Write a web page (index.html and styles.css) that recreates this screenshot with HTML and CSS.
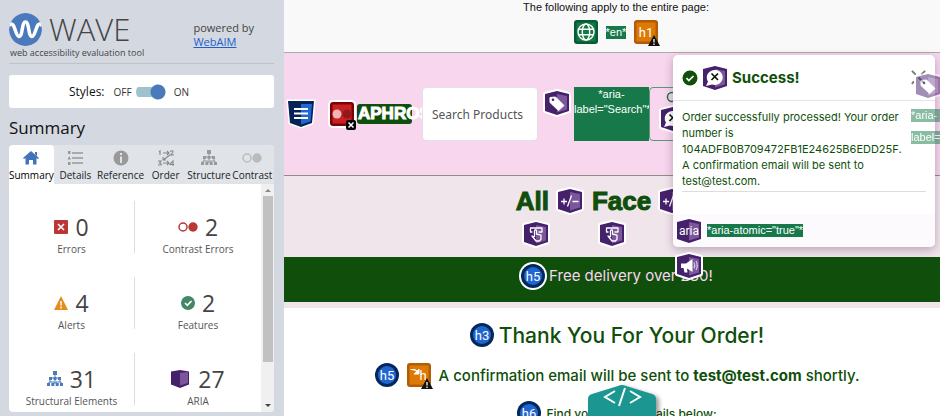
FILE: index.html
```html
<!DOCTYPE html>
<html lang="en">
<head>
<meta charset="utf-8">
<title>WAVE report</title>
<link rel="stylesheet" href="styles.css">
</head>
<body>
<svg class="defs" aria-hidden="true">
  <symbol id="shield" viewBox="-2 -2 28 28">
    <path d="M0 3 12 0l12 3v17l-12 4L0 20z" fill="#45206b" stroke="#fff" stroke-width="4" stroke-linejoin="round" paint-order="stroke"/>
    <path d="M12 3l10 2v13.500l-10 3z" fill="#7b569b"/>
  </symbol>
  <symbol id="tag" viewBox="-2 -2 28 28">
    <use href="#shield" x="-2" y="-2" width="28" height="28"/>
    <path d="M5 6.500 10.500 6l8.500 8.500-5.500 5L5 11.500z" fill="#fff" stroke="#fff" stroke-linejoin="round"/>
    <circle cx="8" cy="8.800" r="1.300" fill="#45206b"/>
  </symbol>
  <symbol id="bubble" viewBox="-2 -2 28 28">
    <use href="#shield" x="-2" y="-2" width="28" height="28"/>
    <path d="M3 20l2-4.500A8 7.500 0 1 1 9 18.500z" fill="#fff"/>
    <path d="M8.500 7.500l6.500 6.500M15 7.500 8.500 14" stroke="#111" stroke-width="1.700"/>
  </symbol>
  <symbol id="press" viewBox="-2 -2 28 28">
    <use href="#shield" x="-2" y="-2" width="28" height="28"/>
    <path d="M8.500 10H6.500V6H18v4h-3.500M10.500 15V8.500q1-1.500 2 0V12l4.500 1.200v4L15.500 19H12l-4-5 2.500 1" fill="none" stroke="#fff" stroke-width="1.300" stroke-linejoin="round"/>
  </symbol>
  <symbol id="expand" viewBox="-2 -2 28 28">
    <use href="#shield" x="-2" y="-2" width="28" height="28"/>
    <path d="M3 12.500h6M6 9.500v6M9.500 17.500l4-11M14.500 12.500h6" fill="none" stroke="#fff" stroke-width="1.300"/>
  </symbol>
  <symbol id="horn" viewBox="-2 -2 28 28">
    <use href="#shield" x="-2" y="-2" width="28" height="28"/>
    <path d="M4 9.500h5L15.500 5v13L10 14.500l.5 4h-3L6.500 14H4z" fill="#fff"/>
    <path d="M17 8.500q1.500 3 0 6M19 7q2.500 4.500 0 9" fill="none" stroke="#d9cbe6" stroke-width="1.200"/>
  </symbol>
  <symbol id="tree" viewBox="0 0 16 16">
    <path d="M8 3v9M3 9V7h10v2M2 13v-2h5v2M9 13v-2h5v2M3 8v3M13 8v3" fill="none" stroke="currentColor"/>
    <path d="M6 0h4v4H6zM2 6h3v3H2zM6.500 6h3v3h-3zM11 6h3v3h-3zM0 12h3v3H0zM4.300 12h3v3h-3zM8.700 12h3v3h-3zM13 12h3v3h-3z" fill="currentColor"/>
  </symbol>
  <symbol id="warn" viewBox="0 0 12 11">
    <path d="M6 0l6 11H0z" fill="#111"/><path d="M6 4v3.500M6 8.500V10" stroke="#fff" stroke-width="1.300"/>
  </symbol>
  <symbol id="ring" viewBox="0 0 24 24">
    <circle cx="12" cy="12" r="12" fill="#04275c"/><circle cx="12" cy="12" r="9" fill="#1f66d0"/>
  </symbol>
  <symbol id="square" viewBox="0 0 24 24">
    <rect width="24" height="24" rx="3" fill="#b25c07"/><rect x="2.500" y="2.500" width="19" height="19" fill="#dd7a06"/>
  </symbol>
</svg>

<aside class="sidebar">
  <header class="brand">
    <div class="brand-main">
      <div class="logo">
        <svg class="logo-mark" viewBox="0 0 33 33" aria-hidden="true"><circle cx="16.500" cy="16.500" r="16.500" fill="#4a7abb"/><path d="M0 12.500C6 6 6 23.500 10 23.500S12.500 9 16.500 9s2.500 14.500 6.500 14.500S27 6 33 12.500" fill="none" stroke="#fff" stroke-width="3.500"/></svg>
        <span class="logo-name">WAVE</span>
      </div>
      <p class="tagline">web accessibility evaluation tool</p>
    </div>
    <p class="powered">powered by<br><a href="#">WebAIM</a></p>
  </header>

  <div class="styles-card">
    <span class="styles-label" id="styles-label">Styles:</span>
    <span>OFF</span>
    <input class="switch" type="checkbox" role="switch" aria-labelledby="styles-label" checked>
    <span>ON</span>
  </div>

  <h1 class="title">Summary</h1>

  <section class="panel">
    <nav class="tabs">
      <button class="tab active"><svg viewBox="0 0 16 16"><path d="M8 1l8 7-1 1-1.500-1v6.500H10V10H6v4.500H2.500V8L1 9 0 8zM12 2h2v4l-2-2z" fill="#4272b8"/></svg>Summary</button>
      <button class="tab"><svg viewBox="0 0 16 16"><path d="M5 3h11M5 8h11M5 13h11" stroke="#999" stroke-width="1.500"/><path d="M1 1h2.500v3H1zM1 12h2.500v3H1zM0.500 9.500 2.200 6l1.800 3.500z" fill="#999"/></svg>Details</button>
      <button class="tab"><svg viewBox="0 0 16 16"><circle cx="8" cy="8" r="7.500" fill="#999"/><path d="M8 3v2M8 6.500V13" stroke="#e0e3e8" stroke-width="2"/></svg>Reference</button>
      <button class="tab"><svg viewBox="0 0 16 16"><path d="M1 2l1-1v4M5 3h6M9 1l2 2-2 2M12 1.500q3-1.500 3 0T12.500 5H16M12 5 5 10M5 7v3h3M0 11h3l-1.500 2Q4 13 3 15H0M5 13h6M9 11l2 2-2 2M15 16v-5l-3 3.500h4" fill="none" stroke="#888" stroke-width="1.100"/></svg>Order</button>
      <button class="tab"><svg class="grey"><use href="#tree"/></svg>Structure</button>
      <button class="tab"><svg class="wide" viewBox="0 0 20 16"><circle cx="5" cy="8" r="4" fill="none" stroke="#bbb" stroke-width="1.500"/><circle cx="15" cy="8" r="4.700" fill="#bbb"/></svg>Contrast</button>
    </nav>
    <div class="panel-body">
      <div class="stats">
        <div class="stat"><p class="count"><svg viewBox="0 0 14 14"><rect width="14" height="14" rx="1" fill="#bb3636"/><path d="M4 4l6 6M10 4l-6 6" stroke="#fff" stroke-width="1.600"/></svg>0</p><p>Errors</p></div>
        <div class="stat"><p class="count"><svg class="i20" viewBox="0 0 20 14"><circle cx="5" cy="7" r="4" fill="none" stroke="#bb3636" stroke-width="1.500"/><circle cx="15" cy="7" r="4.700" fill="#bb3636"/></svg>2</p><p>Contrast Errors</p></div>
        <div class="stat"><p class="count"><svg viewBox="0 0 14 14"><path d="M7 0l7 14H0z" fill="#e58c1a"/><path d="M7 5v4.500M7 10.500v2" stroke="#fff" stroke-width="1.500"/></svg>4</p><p>Alerts</p></div>
        <div class="stat"><p class="count"><svg viewBox="0 0 14 14"><circle cx="7" cy="7" r="7" fill="#438767"/><path d="M4 7l2.300 2.300L10.500 5" fill="none" stroke="#fff" stroke-width="1.700"/></svg>2</p><p>Features</p></div>
        <div class="stat"><p class="count"><svg class="i16 blue"><use href="#tree"/></svg>31</p><p>Structural Elements</p></div>
        <div class="stat"><p class="count"><svg class="i18" viewBox="0 0 18 18"><path d="M0 1.500 9 0l9 1.500v13L9 18l-9-3.500z" fill="#45206b"/><path d="M9 3l8-1v11l-8 2.500z" fill="#7b569b"/></svg>27</p><p>ARIA</p></div>
      </div>
      <div class="scrollbar" aria-hidden="true"><i class="up"></i><i class="thumb"></i><i class="down"></i></div>
    </div>
  </section>
</aside>

<main class="page">
  <section class="entire">
    <p>The following apply to the entire page:</p>
    <div class="entire-icons">
      <svg class="ico" viewBox="0 0 24 24"><rect width="24" height="24" rx="3" fill="#085c35"/><rect x="2.500" y="2.500" width="19" height="19" fill="#127946"/><g fill="none" stroke="#fff" stroke-width="1.400"><circle cx="12" cy="12" r="8"/><ellipse cx="12" cy="12" rx="3.700" ry="8"/><path d="M4.500 9.300h15M4.500 14.700h15"/></g></svg>
      <span class="note">*en*</span>
      <svg class="ico" viewBox="0 0 24 24"><use href="#square"/><text x="12" y="17" text-anchor="middle">h1</text><use href="#warn" x="14" y="15" width="12" height="11"/></svg>
    </div>
  </section>

  <header class="shop">
    <svg class="framed" viewBox="-2 -2 28 28"><path d="M-1-1h26l-2 22-11 4L1 21z" fill="#052356" stroke="#fff" stroke-width="3" paint-order="stroke"/><path d="M12 2h11l-1.500 17.500L12 22.500z" fill="#1f66d0"/><path d="M5 7h14M5 11.500h14M5 16h14" stroke="#fff" stroke-width="2"/></svg>
    <svg class="framed contrast" viewBox="-2 -2 28 28"><rect width="24" height="24" rx="3" fill="#7c0205" stroke="#fff" stroke-width="4" paint-order="stroke"/><rect x="2.500" y="2.500" width="19" height="19" fill="#ca2023"/><circle cx="7" cy="12" r="4.500" fill="#f0b5b9"/><circle cx="17" cy="12" r="4.500" fill="#92171a"/><rect x="16" y="18" width="10" height="10" rx="2" fill="#000"/><path d="M18.500 20.500l5 5M23.500 20.500l-5 5" stroke="#fff" stroke-width="1.500"/></svg>
    <a class="shop-logo" href="#">APHROS</a>
    <input class="search" type="text" placeholder="Search Products" aria-label="Search Products">
    <svg class="framed raised"><use href="#tag"/></svg>
    <div class="search-note">*aria-<br>label="Search"*</div>
    <button class="search-btn" aria-label="Search">
      <svg class="lens" viewBox="0 0 14 14"><circle cx="6" cy="6" r="4.500" fill="none" stroke="#127946" stroke-width="1.500"/><path d="M9 9l4 4" stroke="#127946" stroke-width="1.500"/></svg>
      <svg class="framed"><use href="#bubble"/></svg>
    </button>
  </header>

  <nav class="menu">
    <div class="menu-item"><div class="menu-top"><a href="#">All</a><svg class="framed"><use href="#expand"/></svg></div><svg class="framed hand"><use href="#press"/></svg></div>
    <div class="menu-item"><div class="menu-top"><a href="#">Face</a><svg class="framed"><use href="#expand"/></svg></div><svg class="framed hand"><use href="#press"/></svg></div>
  </nav>

  <div class="banner">
    <svg class="framed" viewBox="-2 -2 28 28"><circle cx="12" cy="12" r="14" fill="#fff"/><use href="#ring" width="24" height="24"/><text x="12" y="17" text-anchor="middle">h5</text></svg>
    <h5>Free delivery over £30!</h5>
  </div>

  <section class="thanks">
    <div class="line"><svg class="ico" viewBox="0 0 24 24"><use href="#ring"/><text x="12" y="17" text-anchor="middle">h3</text></svg><h3>Thank You For Your Order!</h3></div>
    <div class="line second"><svg class="ico" viewBox="0 0 24 24"><use href="#ring"/><text x="12" y="17" text-anchor="middle">h5</text></svg><svg class="ico" viewBox="0 0 24 24"><use href="#square"/><path d="M3.500 6.500q5-1 7 2M12 6v5H7z" fill="#fff" stroke="#fff"/><text x="16" y="17" text-anchor="middle">h</text><use href="#warn" x="14" y="15" width="12" height="11"/></svg><h5>A confirmation email will be sent to <b>test@test.com</b> shortly.</h5></div>
    <div class="line"><svg class="ico" viewBox="0 0 24 24"><use href="#ring"/><text x="12" y="17" text-anchor="middle">h6</text></svg><h6>Find your order details below:</h6></div>
  </section>

  <section class="toast" role="alert">
    <header class="toast-head">
      <svg class="check" viewBox="0 0 16 16"><circle cx="8" cy="8" r="7.500" fill="#0f4f0b"/><path d="M4.500 8.200l2.300 2.300L11.500 6" fill="none" stroke="#fff" stroke-width="1.700"/></svg>
      <svg class="framed"><use href="#bubble"/></svg>
      <strong>Success!</strong>
      <button class="close" aria-label="Close"><svg viewBox="0 0 16 16"><path d="M1 1l4 4M15 1l-4 4M1 15l2-3M8 8l7 7" stroke="#777" stroke-width="2"/></svg></button>
    </header>
    <div class="toast-body">
      <p>Order successfully processed! Your order number is 104ADFB0B709472FB1E24625B6EDD25F. A confirmation email will be sent to test@test.com.</p>
    </div>
    <footer class="toast-foot">
      <svg class="framed" viewBox="-2 -2 28 28"><use href="#shield" x="-2" y="-2" width="28" height="28"/><text class="aria" x="12" y="16" text-anchor="middle">aria</text></svg>
      <span class="note">*aria-atomic="true"*</span>
    </footer>
    <svg class="framed horn"><use href="#horn"/></svg>
  </section>

  <div class="side-tag">
    <svg class="framed"><use href="#tag"/></svg>
    <span class="note">*aria-</span>
    <span class="note">label=</span>
  </div>

  <button class="code">
    <svg viewBox="0 0 68 60" aria-hidden="true"><path d="M34 0Q36 0 38 1L64 9Q68 10 68 14V60H0V14Q0 10 4 9L30 1Q32 0 34 0z" fill="#1b9690"/><path d="M27 6 17 12l10 6M42 6l10 6-10 6M37 3l-6 18" fill="none" stroke="#fff" stroke-width="2"/></svg>
    <span>Code</span>
  </button>
</main>
</body>
</html>
```
FILE: styles.css
```css
* { box-sizing: border-box; }
body { margin: 0; height: 100vh; display: flex; overflow: hidden; font-family: "Open Sans", "Noto Sans", sans-serif; color: #111; }
p, h1, h3, h5, h6 { margin: 0; }
button { font: inherit; border: 0; background: none; padding: 0; }
svg { display: block; flex: none; overflow: visible; }
.defs { position: absolute; width: 0; height: 0; }
svg text { font: 13px Roboto, sans-serif; fill: #fff; }
svg text.aria { font-size: 12px; }
.ico { width: 24px; height: 24px; }
.framed { width: 28px; height: 28px; }

/* Sidebar */
.sidebar { flex: 0 0 284px; display: flex; flex-direction: column; padding: 12px 10px 4px 9px; background: #d4d8e0; }
.brand { display: flex; justify-content: space-between; padding-bottom: 3px; border-bottom: 1px solid #bfc3c9; }
.logo { display: flex; align-items: center; gap: 7px; height: 34px; }
.logo-mark { width: 33px; height: 33px; overflow: hidden; border-radius: 50%; }
.logo-name { font-size: 31px; font-weight: 300; line-height: 34px; color: #444; }
.tagline { padding-left: 1px; font-size: 9px; line-height: 14px; color: #444; }
.powered { padding: 9px 20px 0 0; font-size: 11px; line-height: 14px; color: #444; }
.powered a { color: #1a5fcb; }
.styles-card { display: flex; align-items: center; gap: 4px; height: 33px; margin-top: 11px; padding-left: 60px; border-radius: 3px; background: #fff; font-size: 10px; color: #333; }
.styles-label { margin-right: 5px; font-size: 12px; color: #111; }
.switch { appearance: none; width: 30px; height: 16px; margin: 0 4px 0 0; border-radius: 8px; background: radial-gradient(circle at 22px 8px, #4a7abb 7px, transparent 8px), linear-gradient(#9fc3cc, #9fc3cc) 0 3px / 22px 10px no-repeat; }
.title { margin: 8px 0 6px; font-size: 17px; font-weight: 400; line-height: 23px; }
.panel { flex: 1; min-height: 0; display: flex; flex-direction: column; overflow: hidden; border-radius: 4px; background: #fff; }
.tabs { display: grid; grid-template-columns: repeat(6, 1fr); background: #e0e3e8; }
.tab { display: flex; flex-direction: column; align-items: center; gap: 2px; height: 39px; padding-top: 5px; border-radius: 4px 4px 0 0; font-size: 10px; line-height: 14px; color: #222; }
.tab svg { width: 16px; height: 16px; }
.tab .wide { width: 20px; }
.tab.active { background: #fff; color: #000; }
.grey { color: #999; }
.blue { color: #4a7abb; }
.panel-body { flex: 1; min-height: 0; display: flex; }
.stats { flex: 1; display: grid; grid-template-columns: 1fr 1fr; grid-auto-rows: 52px; row-gap: 24px; padding: 17px 0 0; }
.stat { display: flex; flex-direction: column; align-items: center; padding-top: 11px; font-size: 10px; line-height: 14px; color: #555; }
.stat:nth-child(odd) { border-right: 1px solid #ddd; }
.count { display: flex; align-items: center; gap: 7px; font-size: 23px; line-height: 30px; color: #444; }
.count svg { width: 14px; height: 14px; }
.count .i16 { width: 16px; height: 16px; }
.count .i18 { width: 18px; height: 18px; margin-right: 2px; }
.count .i20 { width: 20px; }
.scrollbar { display: flex; flex-direction: column; align-items: center; width: 13px; padding: 5px 0; background: #f0f0f0; }
.up, .down { border: 3px solid transparent; }
.up { border-top: 0; border-bottom-color: #888; }
.down { border-bottom: 0; border-top-color: #444; }
.thumb { flex: 0 1 76%; width: 10px; margin: 4px 0 auto; background: #c1c1c1; }

/* Page */
.page { position: relative; flex: 1; min-width: 0; display: flex; flex-direction: column; overflow: hidden; background: #fff; }
.entire { flex: none; height: 53px; padding-left: 8px; border-bottom: 1px solid #aaa; background: #f9f9f9; text-align: center; font: 11px/14px "Liberation Sans", sans-serif; }
.entire-icons { display: flex; justify-content: center; align-items: center; gap: 8px; margin-top: 6px; }
.note { background: #17794a; color: #fff; font: 11px/13px "Liberation Sans", sans-serif; }
.shop { flex: none; display: flex; align-items: center; height: 123px; padding-left: 3px; border-bottom: 1px solid #8a9088; background: #f8d6ee; }
.contrast { margin: 0 1px 0 13px; }
.shop-logo { width: 55px; margin-right: 10px; padding: 1px; border-radius: 3px; background: #0f4f0b; color: #fff; -webkit-text-stroke: 1px #fff; font: 700 17px/18px "Liberation Sans Narrow", "Liberation Sans", sans-serif; text-align: center; text-decoration: none; }
.search { width: 116px; height: 54px; padding: 0 9px; border: 1px solid #e3dfe6; border-radius: 4px; background: #fff; font: 12px "Noto Sans", sans-serif; }
.search::placeholder { color: #555; }
.raised { margin: 0 3px 22px 5px; }
.search-note { width: 75px; height: 54px; background: #17794a; color: #fff; text-align: center; font: 11px/15px "Liberation Sans", sans-serif; white-space: nowrap; }
.search-btn { display: flex; flex-direction: column; align-items: center; width: 48px; height: 54px; padding-top: 3px; border: 1px solid #56997a; border-radius: 4px; }
.lens { width: 14px; height: 14px; }
.menu { flex: none; display: flex; justify-content: center; gap: 8px; height: 81px; padding: 11px 22px 0 0; background: #f1e5ec; }
.menu-top { display: flex; align-items: center; gap: 7px; height: 28px; }
.menu a { color: #0f4f0b; -webkit-text-stroke: 1px #0f4f0b; font: 700 26px/28px "Liberation Sans Narrow", "Liberation Sans", sans-serif; text-decoration: none; }
.hand { margin: 5px 0 0 6px; }
.banner { flex: none; display: flex; justify-content: center; align-items: center; gap: 2px; height: 51px; padding: 0 0 8px 8px; border-bottom: 6px solid #f1e5ec; background: #0f4f0b; color: #f8d6ee; }
h3, h5, h6 { font-family: Inter, sans-serif; font-weight: 500; }
.banner h5 { font-size: 15px; font-weight: 400; }
.thanks { display: flex; flex-direction: column; gap: 14px; padding: 15px 0 0 10px; color: #0f4f0b; }
.line { display: flex; justify-content: center; align-items: center; gap: 5px; height: 24px; }
.second { gap: 8px; margin-top: 2px; }
h3 { font-size: 21px; }
.thanks h5 { font-size: 15px; }
h6 { font-size: 12px; }
.line b { font-weight: 700; }

/* Overlays */
.toast { position: absolute; top: 55px; right: 5px; width: 262px; border-radius: 5px; background: #fff; color: #0f4f0b; box-shadow: 0 3px 10px rgba(60, 20, 60, .3); font: 11px/16px Inter, sans-serif; }
.toast-head { display: flex; align-items: center; gap: 3px; height: 46px; padding: 0 9px; border-bottom: 1px solid #e6e6e6; }
.toast-head strong { font-size: 15px; }
.check { width: 16px; height: 16px; }
.close { margin: 0 0 0 auto; }
.close svg { width: 15px; height: 15px; }
.toast-body { margin: 0 9px 22px; padding: 8px 20px 2px 0; border-bottom: 1px solid #ddd; }
.toast-foot { display: flex; align-items: center; gap: 4px; height: 33px; padding-left: 2px; border-radius: 0 0 5px 5px; background: #fcfafc; }
.horn { position: absolute; left: 2px; bottom: -33px; }
.side-tag { position: absolute; top: 72px; left: calc(100% - 29px); display: flex; flex-direction: column; gap: 9px; opacity: .5; }
.side-tag .framed { margin-left: 3px; }
.code { position: absolute; left: calc(50% - 24px); bottom: -29px; width: 68px; height: 60px; padding-top: 19px; color: #fff; filter: drop-shadow(3px 2px 2px rgba(0, 0, 0, .4)); font-size: 12px; line-height: 16px; }
.code svg { position: absolute; inset: 0; width: 68px; height: 60px; }
.code span { position: relative; display: block; }
```
